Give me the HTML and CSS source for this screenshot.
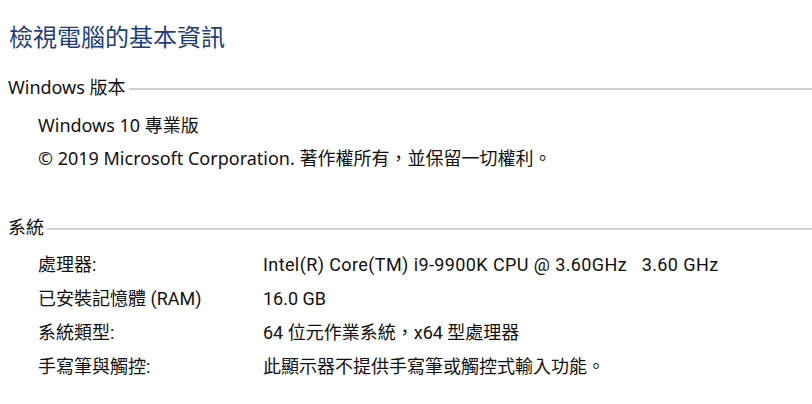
FILE: index.html
```html
<!DOCTYPE html>
<html lang="zh-Hant">
<head>
<meta charset="utf-8">
<title>檢視電腦的基本資訊</title>
<link rel="stylesheet" href="styles.css">
</head>
<body>
<div class="page">
  <h1 class="title">檢視電腦的基本資訊</h1>

  <section class="group">
    <div class="group-head"><span class="group-label">Windows 版本</span><span class="rule"></span></div>
    <div class="edition">
      <p class="line">Windows 10 專業版</p>
      <p class="line">© 2019 Microsoft Corporation. 著作權所有，並保留一切權利。</p>
    </div>
  </section>

  <section class="group system">
    <div class="group-head"><span class="group-label">系統</span><span class="rule"></span></div>
    <div class="specs">
      <div class="row"><span class="key">處理器:</span><span class="val cpu">Intel(R) Core(TM) i9-9900K CPU @ 3.60GHz&nbsp;&nbsp; 3.60 GHz</span></div>
      <div class="row"><span class="key">已安裝記憶體 (RAM)</span><span class="val">16.0 GB</span></div>
      <div class="row"><span class="key">系統類型:</span><span class="val">64 位元作業系統，x64 型處理器</span></div>
      <div class="row"><span class="key">手寫筆與觸控:</span><span class="val">此顯示器不提供手寫筆或觸控式輸入功能。</span></div>
    </div>
  </section>
</div>
</body>
</html>
```

FILE: styles.css
```css
html, body {
  margin: 0;
  padding: 0;
  background: #ffffff;
}

.page {
  font-family: "Noto Sans", "Noto Sans CJK TC", sans-serif;
  color: #111111;
  padding: 25px 0 0 8px;
}

.title {
  margin: 0 0 0 1px;
  font-size: 24px;
  line-height: 24px;
  font-weight: 400;
  color: #1f3f7a;
}

.group-head {
  display: flex;
  align-items: center;
  font-size: 18px;
  line-height: 20px;
}

.group {
  margin-top: 28px;
}

.system {
  margin-top: 49px;
}

.group-label {
  white-space: nowrap;
}

.rule {
  flex: 1;
  height: 2px;
  background: #cfcfcf;
  margin-left: 3px;
  margin-top: 4px;
}

.edition {
  padding-left: 30px;
  margin-top: 18px;
}

.line {
  margin: 0 0 13px 0;
  font-size: 18px;
  line-height: 20px;
}

.specs {
  padding-left: 30px;
  margin-top: 18px;
  font-family: "Roboto", "Noto Sans CJK TC", sans-serif;
}

.row {
  display: grid;
  grid-template-columns: 225px 1fr;
  font-size: 18px;
  line-height: 20px;
  margin-bottom: 14px;
}

.cpu {
  letter-spacing: 0.4px;
}
```
